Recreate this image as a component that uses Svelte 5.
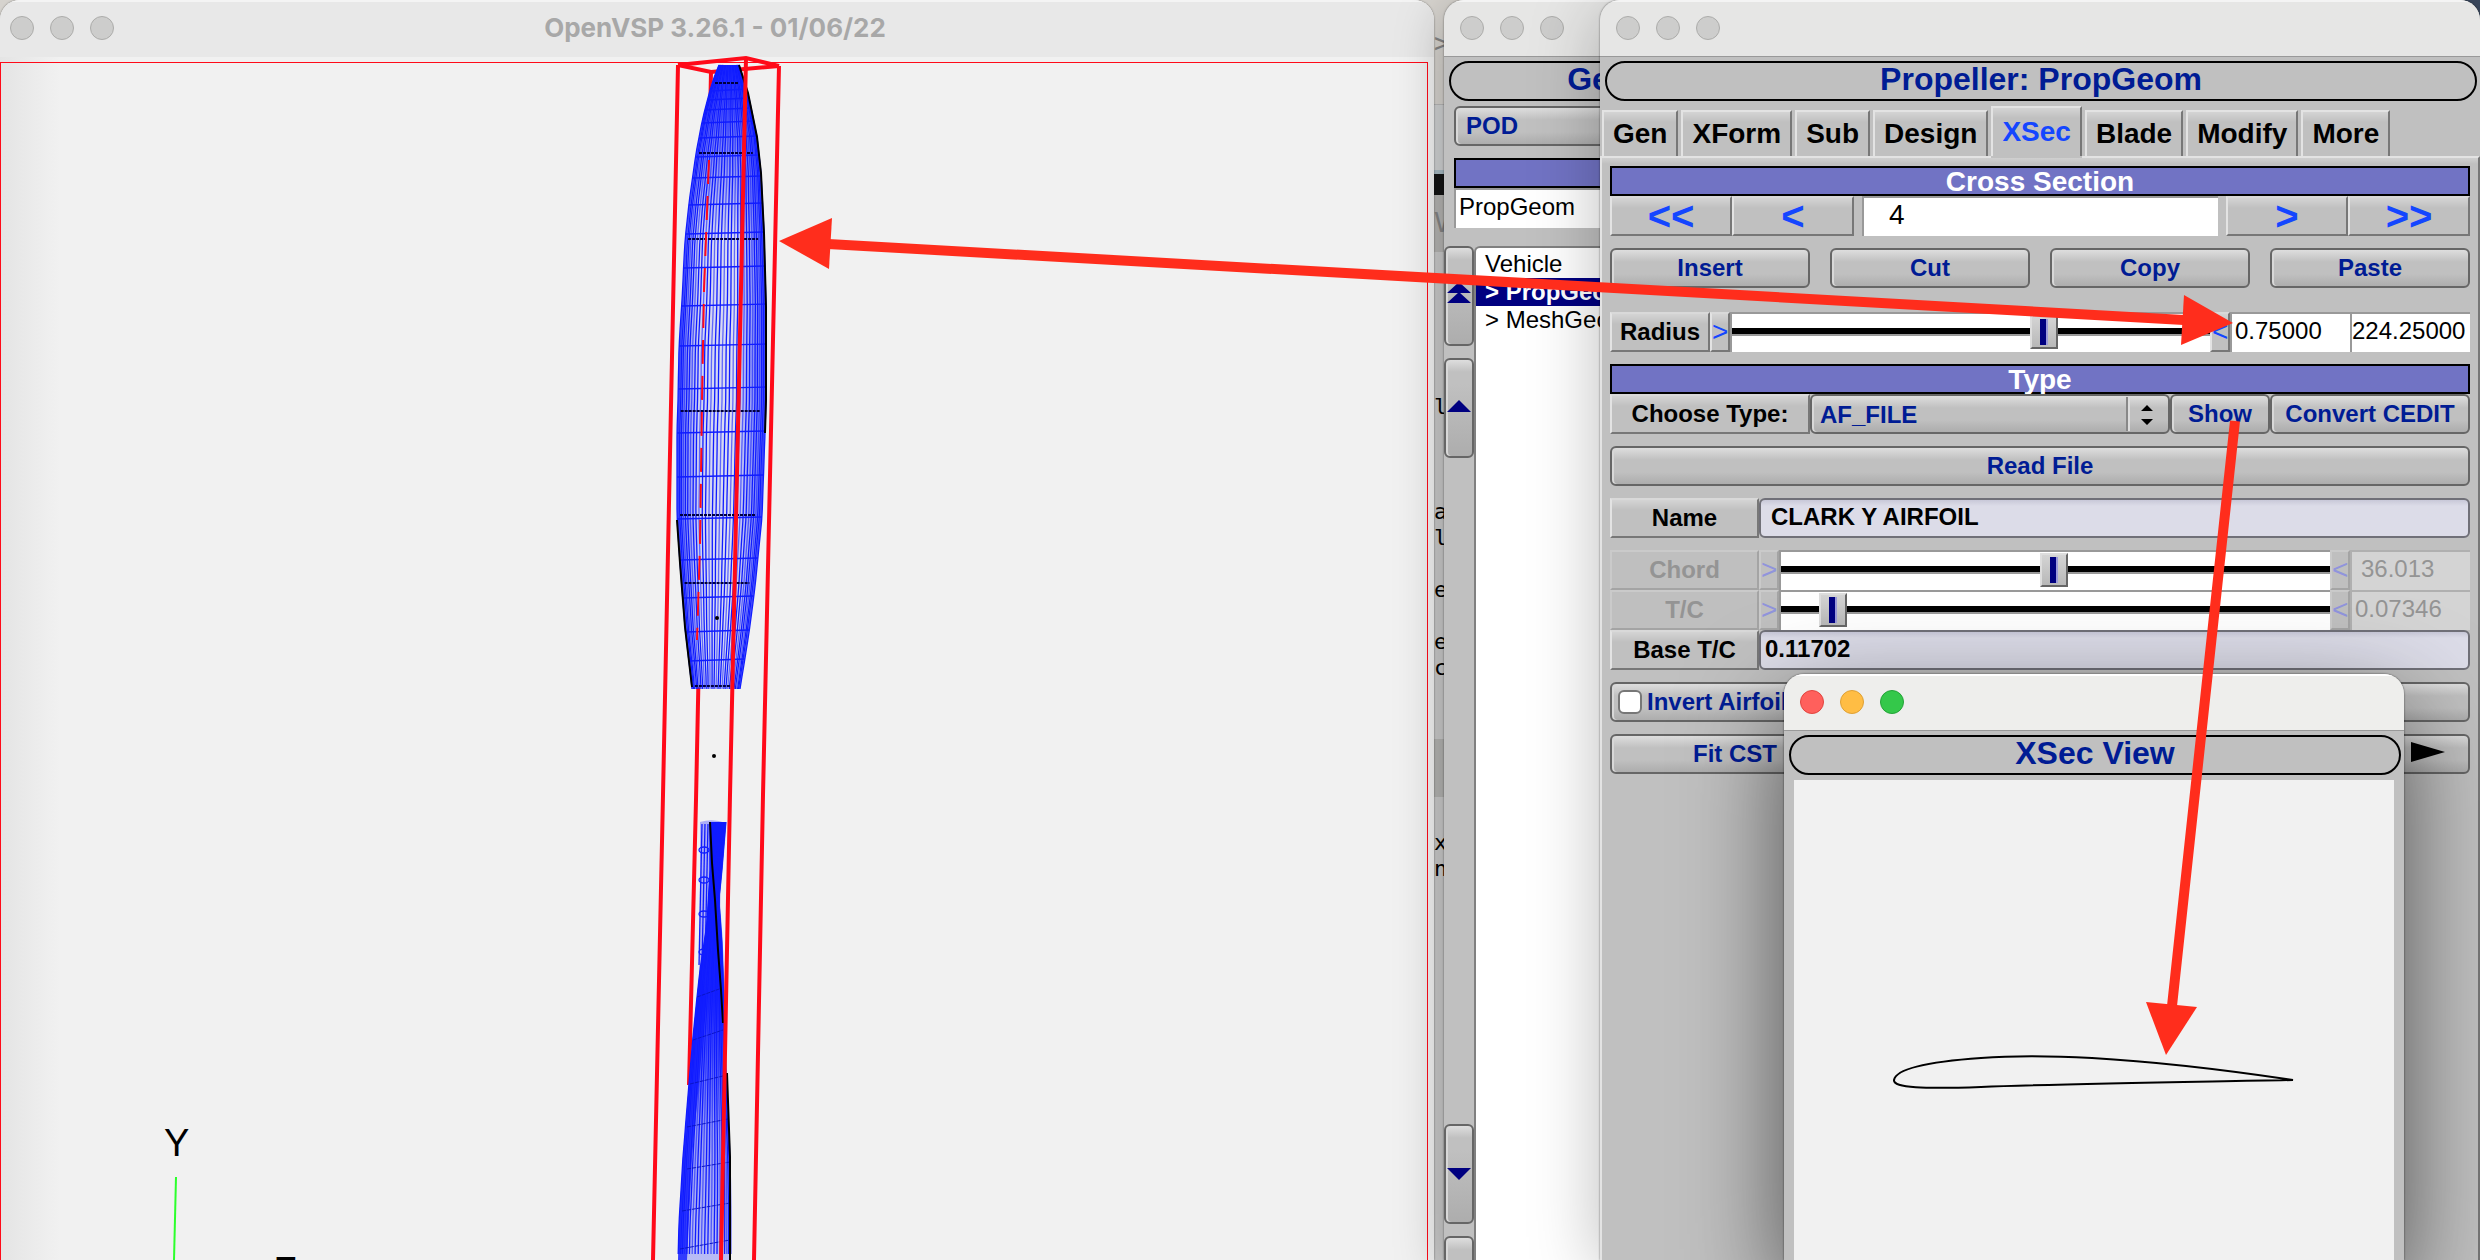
<script lang="ts">
  type Point = [number, number];

  const tabs = ['Gen', 'XForm', 'Sub', 'Design', 'XSec', 'Blade', 'Modify', 'More'];
  const editLines = [
    { text: '>', gap: 0, tool: true },
    { text: 'V', gap: 154, tool: true },
    { text: 'l', gap: 158 },
    { text: 'a', gap: 79 },
    { text: 'l', gap: 0 },
    { text: 'e', gap: 26 },
    { text: 'e', gap: 26 },
    { text: 'c', gap: 0 },
    { text: 'x', gap: 149 },
    { text: 'n', gap: 0 }
  ];

  let activeTab = $state('XSec');
  let section = $state('4');
  let radius = $state(0.662);
  let radiusText = $state('0.75000');
  let radiusAbs = $state('224.25000');
  let invert = $state(false);
  let selected = $state('PropGeom');

  // blade outlines, top to bottom
  const upperLeft: Point[] = [
    [719, 65], [712, 83], [703, 117], [696, 153], [689, 203], [685, 240], [682, 300], [679, 347],
    [678, 400], [677, 432], [677, 517], [680, 563], [685, 627], [692, 687]
  ];
  const upperRight: Point[] = [
    [739, 65], [748, 93], [757, 137], [761, 173], [764, 233], [766, 307], [766, 400], [765, 433],
    [762, 517], [755, 587], [749, 633], [740, 689]
  ];
  const lowerLeft: Point[] = [
    [710, 822], [710, 873], [707, 923], [700, 970], [697, 997], [693, 1037], [689, 1083],
    [683, 1157], [679, 1223], [678, 1260]
  ];
  const lowerRight: Point[] = [
    [726, 822], [722, 870], [719, 900], [722, 940], [724, 990], [725, 1040], [727, 1090],
    [730, 1157], [731, 1210], [731, 1260]
  ];

  function edge(points: Point[], y: number) {
    for (let i = 1; i < points.length; i++) {
      const [x0, y0] = points[i - 1];
      const [x1, y1] = points[i];
      if (y <= y1) return x0 + ((x1 - x0) * (y - y0)) / (y1 - y0);
    }
    return points[points.length - 1][0];
  }

  function mesh(left: Point[], right: Point[], top: number, bottom: number, count: number) {
    const lines: string[] = [];
    for (let i = 0; i <= count; i++) {
      const t = i / count;
      // bunch the lines towards both edges
      const u = 0.4 * t + 0.6 * (0.5 - 0.5 * Math.cos(Math.PI * t));
      const pts: string[] = [];
      for (let y = top; y <= bottom; y += 12) {
        const l = edge(left, y);
        const r = edge(right, y);
        pts.push(`${(l + (r - l) * u).toFixed(1)},${y}`);
      }
      lines.push(pts.join(' '));
    }
    return lines;
  }

  function outline(left: Point[], right: Point[]) {
    return [...left, ...[...right].reverse()].map((p) => p.join(',')).join(' ');
  }

  const upperMesh = mesh(upperLeft, upperRight, 65, 689, 32);
  const lowerMesh = mesh(lowerLeft, lowerRight, 822, 1262, 22);
  const ribs = [90, 99, 109, 122, 137, 156, 177, 204, 233, 267, 305, 345, 388, 432, 476, 518, 559, 597, 631, 660];
  const darkRibs = [83, 153, 239, 411, 515, 583, 686];
  const lowerRibs = [
    [697, 997, 722, 988], [693, 1040, 723, 1030], [690, 1084, 727, 1075], [687, 1127, 728, 1119],
    [687, 1169, 730, 1162], [682, 1211, 730, 1203], [680, 1249, 730, 1240]
  ];
</script>

{#snippet lights(live: boolean)}
  <span class="lights" class:live><i></i><i></i><i></i></span>
{/snippet}

{#snippet drive(name: string, value: number, text: string)}
  <div class="row">
    <span class="flat label w150 off">{name}</span>
    <button class="flat step off" disabled aria-label="{name} lower limit">&gt;</button>
    <input class="slider" type="range" min="0" max="1" step="0.001" {value} aria-label={name} />
    <button class="flat step off" disabled aria-label="{name} upper limit">&lt;</button>
    <input class="sunk w120 off" class:inset={text.length < 7} value={text} disabled aria-label="{name} value" />
  </div>
{/snippet}

<div class="desktop">
  <div class="editor">
    <div class="code">
      {#each editLines as line}
        <span class:tool={line.tool} style:margin-top="{line.gap}px">{line.text}</span>
      {/each}
    </div>
  </div>

  <main class="window viewer">
    <header class="titlebar">
      {@render lights(false)}
      <h1>OpenVSP 3.26.1 - 01/06/22</h1>
    </header>
    <div class="gl"></div>
    <svg class="scene" role="img" aria-label="Propeller wireframe">
      <defs>
        <linearGradient id="upper-fill" x1="0" x2="1">
          <stop offset="0" stop-color="#1a28ff" stop-opacity="0.7" />
          <stop offset="0.25" stop-color="#1a28ff" stop-opacity="0.15" />
          <stop offset="0.65" stop-color="#1a28ff" stop-opacity="0.1" />
          <stop offset="1" stop-color="#1a28ff" stop-opacity="0.7" />
        </linearGradient>
        <linearGradient id="tip-fill" x2="0" y2="1">
          <stop offset="0" stop-color="#101cff" stop-opacity="0.9" />
          <stop offset="0.3" stop-color="#101cff" stop-opacity="0.6" />
          <stop offset="1" stop-color="#101cff" stop-opacity="0" />
        </linearGradient>
        <linearGradient id="core-fill" x2="0" y2="1">
          <stop offset="0" stop-color="#101cff" />
          <stop offset="0.4" stop-color="#101cff" stop-opacity="0.95" />
          <stop offset="0.7" stop-color="#101cff" stop-opacity="0.4" />
          <stop offset="1" stop-color="#101cff" stop-opacity="0.25" />
        </linearGradient>
      </defs>
      <g class="box">
        <path d="M678 65 711 72 779 66" />
        <path d="M711 72 696 800 689 1085" />
      </g>
      <polygon class="under" points={outline(upperLeft, upperRight)} />
      <polygon fill="url(#upper-fill)" points={outline(upperLeft, upperRight)} />
      <polygon
        fill="url(#tip-fill)"
        points="719,65 712,83 703,117 696,153 689,203 685,240 764,233 761,173 757,137 748,93 739,65"
      />
      {#each upperMesh as points, i}
        <polyline class="wire" class:faint={i % 3 === 1} {points} />
      {/each}
      {#each ribs as y}
        <line class="wire" x1={edge(upperLeft, y)} y1={y + 1} x2={edge(upperRight, y)} y2={y - 1} />
      {/each}
      {#each darkRibs as y}
        <line class="dark" x1={edge(upperLeft, y) + 3} y1={y} x2={edge(upperRight, y) - 6} y2={y} />
      {/each}
      <path class="lead" d="M739 65 748 93 757 137 761 173 764 233 766 307 766 400 765 433 M677 520 680 563 685 627 692 687" />
      <path class="ghost" d="M709 160 704 290 702 400 700 545 697 640" />

      <path class="root" d="M700 822 Q713 818 726 823 L719 900 707 945 699 985 700 873Z" />
      {#each [702, 705, 708] as x}
        <line class="wire" x1={x} y1="824" x2={x - 3} y2="965" />
      {/each}
      {#each [850, 880, 914, 952] as y}
        <ellipse class="wire" cx="704" cy={y} rx="5" ry="3" />
      {/each}
      <polygon class="under" points={outline(lowerLeft, lowerRight)} />
      <polygon fill="url(#core-fill)" points={outline(lowerLeft, lowerRight)} />
      {#each lowerMesh as points, i}
        <polyline class="wire" class:faint={i % 3 === 1} {points} />
      {/each}
      <path class="fold" d="M700 970 697 997 693 1037 689 1083 683 1157 679 1223 678 1260 687 1260 692 1157 699 1083 706 1000Z" />
      {#each lowerRibs as [x1, y1, x2, y2]}
        <line class="rib" {x1} {y1} {x2} {y2} />
      {/each}
      <path class="lead" d="M710 822 712 863 715 900 718 950 721 990 723 1023 M727 1073 730 1157 730 1260" />
      <circle cx="714" cy="756" r="2" />
      <circle cx="717" cy="618" r="2" />

      <g class="box">
        <path d="M678 65 746 58 779 66" />
        <path d="M678 65 663 795 653 1260" />
        <path d="M779 66 763 795 754 1260" />
        <path d="M746 58 730 795 721 1260" />
      </g>
      <line class="axis" x1="176" y1="1177" x2="174" y2="1260" />
      <text x="164" y="1156">Y</text>
      <text x="274" y="1284">Z</text>
    </svg>
  </main>

  <section class="window geoms">
    <header class="titlebar">{@render lights(false)}</header>
    <h2 class="pill">Geom Browser</h2>
    <div class="geom-form">
      <button class="soft pod">POD</button>
      <div class="bar"></div>
      <input class="sunk" value="PropGeom" aria-label="Geom name" />
    </div>
    <div class="browser">
      <div class="reorder">
        <button class="soft" aria-label="Move to top">
          <svg viewBox="0 0 24 22"><path d="M0 11 12 0 24 11ZM0 21 12 10 24 21Z" /></svg>
        </button>
        <button class="soft" aria-label="Move up">
          <svg viewBox="0 0 24 22"><path d="M0 18 12 6 24 18Z" /></svg>
        </button>
        <button class="soft last" aria-label="Move down">
          <svg viewBox="0 0 24 22"><path d="M0 8 12 20 24 8Z" /></svg>
        </button>
        <button class="soft" aria-label="Move to bottom"></button>
      </div>
      <ul>
        <li>Vehicle</li>
        {#each ['PropGeom', 'MeshGeom'] as name}
          <li class:selected={selected === name}>
            <button onclick={() => (selected = name)}>&gt; {name}</button>
          </li>
        {/each}
      </ul>
    </div>
  </section>

  <section class="window prop">
    <header class="titlebar">{@render lights(false)}</header>
    <h2 class="pill">Propeller: PropGeom</h2>
    <nav>
      {#each tabs as tab}
        <button class:active={activeTab === tab} onclick={() => (activeTab = tab)}>{tab}</button>
      {/each}
    </nav>
    <div class="panel">
      <h3 class="bar">Cross Section</h3>
      <div class="row">
        <button class="flat jump" aria-label="First section">&lt;&lt;</button>
        <button class="flat jump" aria-label="Previous section">&lt;</button>
        <input class="sunk index" bind:value={section} aria-label="Section" />
        <button class="flat jump" aria-label="Next section">&gt;</button>
        <button class="flat jump" aria-label="Last section">&gt;&gt;</button>
      </div>
      <div class="row spread gap-s">
        <button class="soft">Insert</button>
        <button class="soft">Cut</button>
        <button class="soft">Copy</button>
        <button class="soft">Paste</button>
      </div>
      <div class="row gap-l">
        <span class="flat label w100">Radius</span>
        <button class="flat step" aria-label="Radius lower limit">&gt;</button>
        <input class="slider" type="range" min="0" max="1" step="0.001" bind:value={radius} aria-label="Radius" />
        <button class="flat step" aria-label="Radius upper limit">&lt;</button>
        <input class="sunk w120" bind:value={radiusText} aria-label="Radius fraction" />
        <input class="sunk w120 tight" bind:value={radiusAbs} aria-label="Radius length" />
      </div>

      <h3 class="bar gap-s">Type</h3>
      <div class="row">
        <label class="flat label w200" for="xsec-type">Choose Type:</label>
        <span class="choice">
          <select id="xsec-type" class="soft">
            <option>AF_FILE</option>
          </select>
          <svg viewBox="0 0 12 20"><path d="M0 6 6 0 12 6ZM0 14 6 20 12 14Z" /></svg>
        </span>
        <button class="soft w100">Show</button>
        <button class="soft w200">Convert CEDIT</button>
      </div>
      <div class="row spread gap-s"><button class="soft">Read File</button></div>
      <div class="row gap-s">
        <label class="flat label w150" for="af-name">Name</label>
        <input id="af-name" class="field name" value="CLARK Y AIRFOIL" />
      </div>
      <div class="gap-s">
        {@render drive('Chord', 0.497, '36.013')}
        {@render drive('T/C', 0.073, '0.07346')}
      </div>
      <div class="row">
        <label class="flat label w150" for="base-tc">Base T/C</label>
        <input id="base-tc" class="field" value="0.11702" readonly />
      </div>
      <label class="row soft check gap-s">
        <input type="checkbox" bind:checked={invert} />
        Invert Airfoil
      </label>
      <div class="row ends gap-s">
        <button class="soft w250">Fit CST</button>
        <button class="soft w84" aria-label="More options">
          <svg viewBox="0 0 34 20"><path d="M0 0 34 10 0 20Z" /></svg>
        </button>
      </div>
    </div>
  </section>

  <section class="window xsec">
    <header class="titlebar">{@render lights(true)}</header>
    <h2 class="pill">XSec View</h2>
    <div class="plot">
      <svg viewBox="0 0 600 480" role="img" aria-label="Clark Y airfoil section">
        <path
          d="M100 300C102 289 130 282 187 278C225 275 262 276 298 278C350 281 412 287 499 300C400 302 260 304 187 307C130 309 99 308 100 300Z"
        />
      </svg>
    </div>
  </section>

  <svg class="callouts" viewBox="0 0 2480 1260" aria-hidden="true">
    <path class="shaft" d="M828 244 2184 320M2235 421 2172 1006" />
    <path d="M779 241 832 218 829 269Z" />
    <path d="M2233 323 2184 295 2181 345Z" />
    <path d="M2166 1055 2146 1002 2197 1007Z" />
  </svg>
</div>

<style>
  :global(body) {
    background: #3c4a60;
  }

  .desktop {
    position: relative;
    height: 100vh;
    overflow: hidden;
    background: #3c4a60;
    color: #000;
    font-family: 'Liberation Sans', Arial, sans-serif;
    font-size: 24px;
  }

  .desktop * {
    box-sizing: border-box;
  }

  h1,
  h2,
  h3,
  ul {
    margin: 0;
    padding: 0;
  }

  button,
  input,
  select {
    margin: 0;
    border-radius: 0;
    color: inherit;
    font: inherit;
  }

  .editor {
    position: absolute;
    inset: 0 900px 0 0;
    padding-top: 30px;
    background: linear-gradient(
      #d6d3ce 0 104px,
      #b8b8b8 104px 105px,
      #d0d2d3 105px 170px,
      #a9bcc4 170px 174px,
      #151515 174px 195px,
      #b5b4b2 195px 252px,
      #cacaca 252px 664px,
      #cacaca 664px 739px,
      #b4b4b2 739px 797px,
      #cacaca 797px
    );
  }

  .code {
    display: flex;
    flex-direction: column;
    width: 146px;
    margin-left: auto;
    font: 22px/26px 'DejaVu Sans Mono', monospace;
  }

  .tool {
    color: #858585;
    font-size: 26px;
  }

  .window {
    position: absolute;
    top: 0;
    bottom: 0;
    overflow: hidden;
    border-radius: 20px 20px 0 0;
    background: #c0c0c0;
  }

  .titlebar {
    display: flex;
    align-items: center;
    height: 57px;
    padding: 0 16px 2px;
    border-top: 2px solid #f4f4f4;
    border-bottom: 1px solid #999;
    background: #e6e6e5;
  }

  .lights {
    display: flex;
    gap: 16px;
  }

  .lights i {
    width: 24px;
    height: 24px;
    border: 1px solid #acacaa;
    border-radius: 50%;
    background: #cdcdcc;
  }

  .live i:nth-child(1) {
    border-color: #e0443e;
    background: #ff605c;
  }

  .live i:nth-child(2) {
    border-color: #dea035;
    background: #ffbd44;
  }

  .live i:nth-child(3) {
    border-color: #24a338;
    background: #34c84a;
  }

  .viewer {
    left: 0;
    right: 1046px;
    background: linear-gradient(90deg, #e4e4e4, #f1f1f1 60px);
    box-shadow: 0 0 2px #0008;
  }

  .viewer .titlebar {
    padding: 0 10px 4px;
    border-bottom: 0;
    background: #e8e8e8;
  }

  .viewer h1 {
    flex: 1;
    padding-right: 108px;
    color: #a8a8a8;
    font: 700 26px/32px Inter, sans-serif;
    text-align: center;
  }

  .gl {
    height: calc(100% - 62px);
    margin: 5px 6px 0 0;
    border: 1px solid #ff0a19;
    border-bottom: 0;
  }

  .scene {
    position: absolute;
    inset: 0;
    width: 100%;
    height: 100%;
    font-size: 38px;
  }

  .box path {
    fill: none;
    stroke: #ff0a19;
    stroke-width: 4;
  }

  .under {
    fill: #f1f1f1;
  }

  .root {
    fill: #2a30ff;
    fill-opacity: 0.35;
  }

  .fold {
    fill: #101cff;
    fill-opacity: 0.8;
  }

  .wire {
    fill: none;
    stroke: #101cff;
    stroke-width: 1.3;
  }

  .faint {
    stroke-opacity: 0.6;
  }

  .dark {
    stroke: #000040;
    stroke-width: 2;
    stroke-dasharray: 3 1;
  }

  .rib {
    stroke: #0a14c8;
    stroke-dasharray: 4 1;
  }

  .lead {
    fill: none;
    stroke: #000;
    stroke-width: 2;
  }

  .ghost {
    fill: none;
    stroke: #ff0a19;
    stroke-width: 2;
    stroke-dasharray: 24 12;
  }

  .axis {
    stroke: #2cff2c;
    stroke-width: 2;
  }

  .pill {
    height: 40px;
    margin: 4px 3px 0 5px;
    border: 2px solid #000;
    border-radius: 20px;
    color: #001c94;
    font-size: 32px;
    line-height: 32px;
    text-align: center;
  }

  .bar {
    height: 30px;
    border: 2px solid #000;
    background: #7173c4;
    color: #fff;
    font-size: 28px;
    line-height: 28px;
    text-align: center;
  }

  .flat {
    border: 2px solid #777;
    border-color: #d9d9d9 #777 #777 #e3e3e3;
    background: linear-gradient(#d4d4d4, #c0c0c0 10px);
  }

  .soft {
    padding: 0;
    border: 2px solid #666;
    border-radius: 6px;
    background: linear-gradient(#dedede, #c0c0c0 12px, #c0c0c0 24px, #adadad);
    box-shadow: inset 2px 0 #d8d8d8;
    color: #001c94;
    font-weight: 700;
  }

  .sunk {
    min-width: 0;
    height: 40px;
    padding: 0 3px 4px;
    border: 2px solid #999;
    border-width: 2px 0 0 2px;
    background: #fff;
  }

  .field {
    flex: 1;
    height: 40px;
    padding: 0 4px 2px;
    border: 2px solid #707078;
    border-radius: 6px;
    background: linear-gradient(#c8c8d8, #dcdce8 6px);
    font-weight: 700;
  }

  .name {
    padding-left: 10px;
  }

  .geoms {
    right: 564px;
    width: 472px;
    box-shadow: 0 0 2px #0008, 0 10px 50px #0004;
  }

  .geom-form {
    display: flex;
    flex-direction: column;
    padding: 5px 10px 0;
  }

  .pod {
    height: 40px;
    padding-left: 10px;
    text-align: left;
  }

  .geom-form .bar {
    margin-top: 12px;
  }

  .browser {
    display: flex;
    height: calc(100% - 246px);
    margin-top: 18px;
  }

  .reorder {
    display: flex;
    flex-direction: column;
    gap: 12px;
    width: 30px;
    height: 1090px;
  }

  .reorder button {
    flex: none;
    height: 100px;
  }

  .reorder svg {
    width: 24px;
    height: 22px;
    fill: #000080;
  }

  .reorder .last {
    margin-top: auto;
  }

  ul {
    flex: 1;
    padding-top: 2px;
    border: 2px solid #808080;
    border-width: 2px 0 0 2px;
    border-radius: 6px 0 0;
    background: #fff;
    list-style: none;
  }

  li {
    height: 28px;
    padding-left: 9px;
    line-height: 28px;
  }

  li button {
    padding: 0;
    border: 0;
    background: none;
  }

  .selected {
    background: #000080;
    color: #fff;
    font-weight: 700;
  }

  .prop {
    right: 0;
    width: 880px;
    box-shadow: 0 0 2px #0009, 0 10px 70px #0004;
  }

  nav {
    display: flex;
    align-items: flex-end;
    gap: 3px;
    height: 55px;
    padding-left: 2px;
  }

  nav button {
    height: 46px;
    padding: 0 9px;
    border: 2px solid #777;
    border-color: #e3e3e3 #777 transparent #e3e3e3;
    border-bottom: 0;
    background: linear-gradient(#d4d4d4, #c0c0c0 10px);
    font-size: 28px;
    font-weight: 700;
  }

  nav .active {
    z-index: 1;
    height: 50px;
    box-shadow: 0 2px #c0c0c0;
    color: #1446ff;
  }

  .panel {
    min-height: 100%;
    padding: 8px 8px 0;
    border: 2px solid #e3e3e3;
    border-right-color: #777;
    background: linear-gradient(#d0d0d0, #c0c0c0 6px);
  }

  .row {
    display: flex;
    height: 40px;
  }

  .row > .flat,
  .row > button {
    flex: none;
  }

  .spread {
    gap: 20px;
  }

  .spread > button {
    flex: 1;
  }

  .ends {
    justify-content: space-between;
  }

  .ends svg {
    width: 34px;
    height: 20px;
  }

  .gap-s {
    margin-top: 12px;
  }

  .gap-l {
    margin-top: 24px;
  }

  .w84 {
    width: 84px;
  }

  .w100 {
    width: 100px;
  }

  .w120 {
    width: 120px;
  }

  .w150 {
    width: 149px;
  }

  .w200 {
    width: 200px;
  }

  .w250 {
    width: 250px;
  }

  .label {
    font-weight: 700;
    line-height: 36px;
    text-align: center;
  }

  .jump {
    width: 122px;
    padding: 0;
    color: #1446ff;
    font-size: 40px;
    font-weight: 700;
    line-height: 30px;
  }

  .index {
    flex: 1;
    margin: 0 8px;
    padding-left: 25px;
    font-size: 28px;
  }

  .step {
    width: 20px;
    padding: 0;
    color: #1446ff;
    font-size: 28px;
    line-height: 36px;
  }

  .tight {
    padding: 0 0 4px;
  }

  .flat.off {
    border-color: #cacaca #a4a4a4 #a4a4a4 #cacaca;
    background: #bfbfbf;
    color: #949494;
  }

  .step.off {
    color: #9094dc;
  }

  .sunk.off {
    border-color: #b0b0b0;
    background: #d4d4d4;
    color: #949494;
  }

  .inset {
    padding-left: 9px;
  }

  .slider {
    flex: 1;
    min-width: 0;
    height: 40px;
    border: 2px solid #999;
    border-width: 2px 0 0 2px;
    background: #fff;
    appearance: none;
  }

  .slider::-webkit-slider-runnable-track {
    height: 38px;
    background: linear-gradient(transparent 14px, #000 14px 20px, #999 20px 22px, transparent 22px);
  }

  .slider::-webkit-slider-thumb {
    width: 28px;
    height: 34px;
    margin-top: 1px;
    border: 2px solid #666;
    border-color: #ddd #666 #666 #ddd;
    background:
      linear-gradient(90deg, #000080 6px, #9a9ad8 6px) center / 8px 26px no-repeat,
      linear-gradient(#d4d4d4, #b8b8b8);
    appearance: none;
  }

  .choice {
    position: relative;
    flex: 1;
  }

  .choice select {
    width: 100%;
    height: 40px;
    padding-left: 8px;
    background:
      linear-gradient(90deg, #888 2px, #ddd 2px) right 38px center / 4px 34px no-repeat,
      linear-gradient(#dedede, #c0c0c0 12px, #c0c0c0 24px, #adadad);
    appearance: none;
  }

  .choice svg {
    position: absolute;
    top: 11px;
    right: 17px;
    width: 12px;
    height: 20px;
    pointer-events: none;
  }

  .check {
    align-items: center;
    gap: 5px;
    padding-left: 6px;
  }

  .check input {
    width: 24px;
    height: 24px;
    border: 2px solid #777;
    border-radius: 6px;
    background: #fff;
    appearance: none;
  }

  .check input:checked {
    background: #000080;
  }

  .xsec {
    top: 674px;
    right: 76px;
    width: 620px;
    box-shadow: 0 0 2px #000a, 0 36px 100px #0009;
  }

  .xsec .titlebar {
    border-color: #fff #fff #999;
    background: #eeeeec;
  }

  .plot {
    height: 480px;
    margin: 5px 10px 0;
    background: #f1f1f1;
  }

  .plot svg {
    display: block;
    width: 100%;
    height: 100%;
  }

  .plot path {
    fill: none;
    stroke: #000;
    stroke-width: 2;
  }

  .callouts {
    position: absolute;
    inset: 0;
    width: 100%;
    height: 100%;
    fill: #ff2d1c;
    pointer-events: none;
  }

  .shaft {
    stroke: #ff2d1c;
    stroke-width: 10;
  }
</style>
